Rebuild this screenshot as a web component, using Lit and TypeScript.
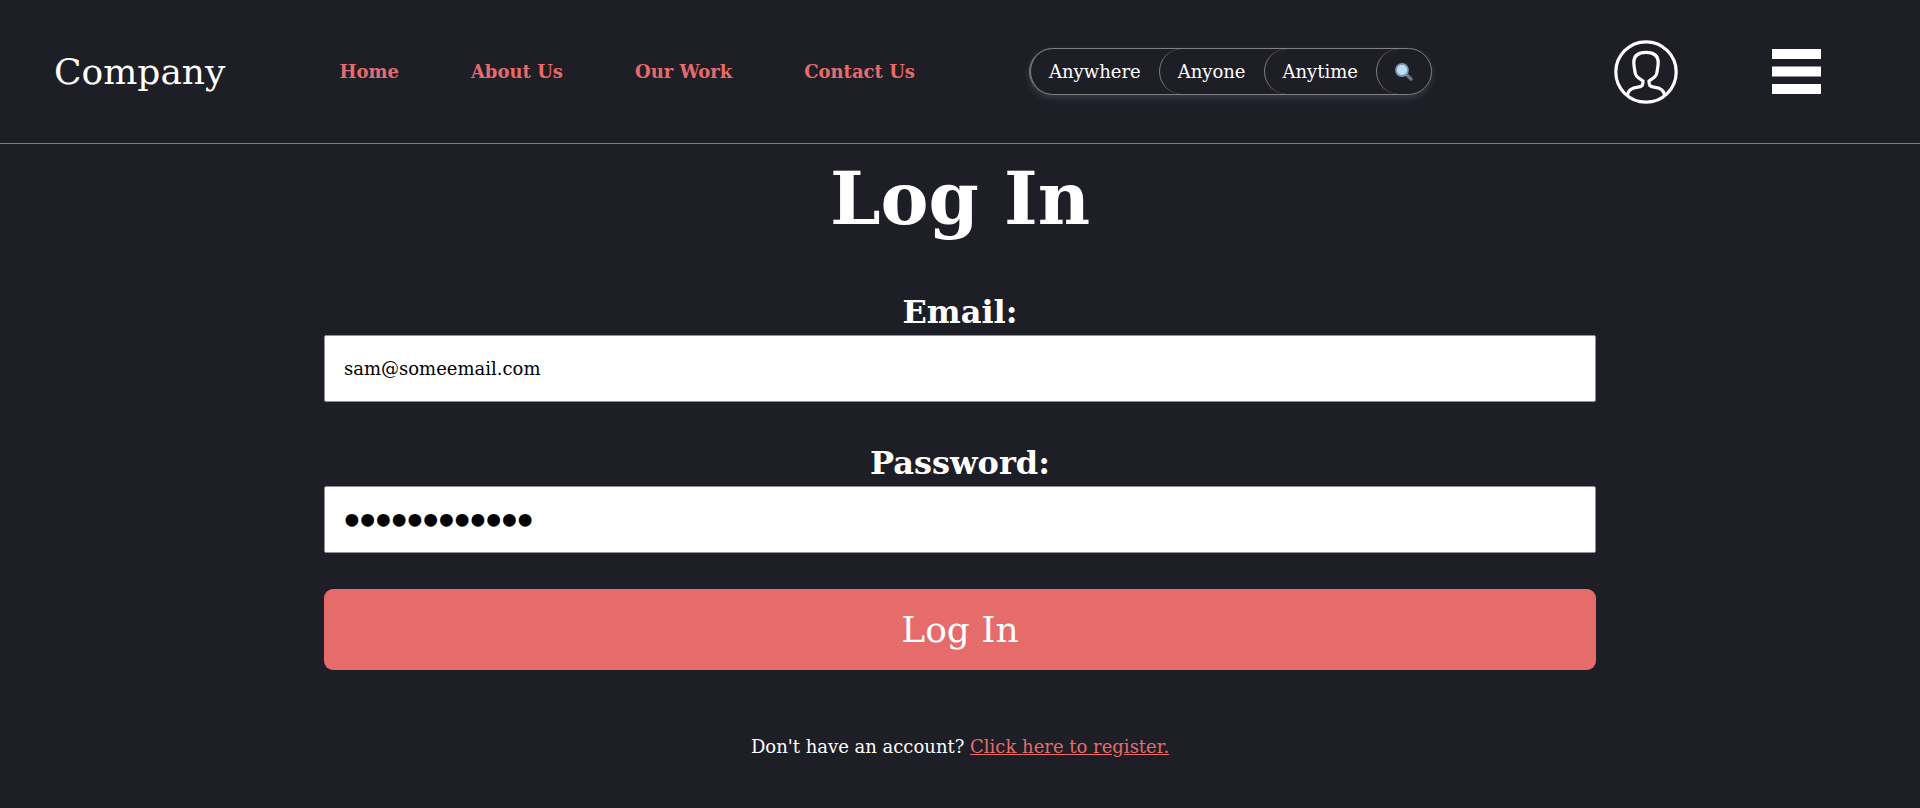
import { LitElement, html, css } from "lit";
import { customElement } from "lit/decorators.js";

@customElement("site-header")
class SiteHeader extends LitElement {
  static styles = css`
    :host {
      display: block;
    }
    .bar {
      display: flex;
      align-items: center;
      justify-content: space-between;
      box-sizing: border-box;
      min-height: 144px;
      padding: 0 99px 0 54px;
      border-bottom: 1px solid #808080;
    }
    .brand {
      font-size: 36px;
      color: inherit;
      text-decoration: none;
    }
    .links {
      display: flex;
      gap: 72px;
      margin: 0;
      padding: 0;
      list-style: none;
    }
    .link {
      color: #e66b6b;
      font-weight: bold;
      text-decoration: none;
    }
    .search {
      display: flex;
      border: 1px solid #808080;
      border-radius: 24px;
      box-shadow: 0 3px 6px rgba(100, 100, 120, 0.4);
    }
    .filter {
      display: flex;
      align-items: center;
      margin: 0;
      padding: 12px 18px;
      border: 0 solid #808080;
      border-left-width: 1px;
      border-radius: 24px;
      background: transparent;
      color: inherit;
      font: inherit;
      line-height: 21px;
    }
    .actions {
      display: flex;
      align-items: center;
      gap: 94px;
      padding-left: 68px;
    }
    .icon-button {
      display: flex;
      margin: 0;
      padding: 0;
      border: 0;
      background: transparent;
      color: inherit;
    }
  `;

  render() {
    return html`
      <header class="bar">
        <a class="brand" href="#">Company</a>
        <nav>
          <ul class="links">
            ${["Home", "About Us", "Our Work", "Contact Us"].map(
              (name) => html`<li><a class="link" href="#">${name}</a></li>`
            )}
          </ul>
        </nav>
        <div class="search" role="search">
          ${["Anywhere", "Anyone", "Anytime"].map(
            (name) => html`<button class="filter" type="button">${name}</button>`
          )}
          <button class="filter" type="button" aria-label="Search">
            <svg width="18" height="18" viewBox="0 0 18 18" aria-hidden="true">
              <path d="M11 11l5 5" stroke="#66788a" stroke-width="3.4" stroke-linecap="round" />
              <circle cx="7" cy="7" r="6" fill="#bbdef8" stroke="#8299aa" stroke-width="1.8" />
            </svg>
          </button>
        </div>
        <div class="actions">
          <button class="icon-button" type="button" aria-label="Account">
            <svg width="64" height="64" viewBox="0 0 64 64" fill="none" stroke="currentColor" stroke-width="3.2" aria-hidden="true">
              <circle cx="32" cy="32" r="30.2" />
              <path d="M13.500 55C14.200 48.500 20.500 47.600 24 47.200C28.500 46.600 29 45.500 29 41C25.500 38.500 22 37.500 21.200 33C20.500 29 19.800 26 19.800 22.500C19.800 15.500 24 12.400 32 12.400S44.200 15.500 44.200 22.500C44.200 26 43.500 29 42.800 33C42 37.500 38.500 38.500 35 41C35 45.500 35.500 46.600 40 47.200C43.500 47.600 49.800 48.500 50.500 55" />
            </svg>
          </button>
          <button class="icon-button" type="button" aria-label="Menu">
            <svg width="49" height="45" viewBox="0 0 49 45" fill="currentColor" aria-hidden="true">
              <path d="M0 0h49v10H0zM0 17.500h49v10H0zM0 35h49v10H0z" />
            </svg>
          </button>
        </div>
      </header>
    `;
  }
}

@customElement("app-root")
class AppRoot extends LitElement {
  static styles = css`
    :host {
      display: block;
      min-height: 100vh;
      background: #1e1e26;
      color: #fff;
      font-family: "DejaVu Serif", serif;
      font-size: 18px;
      line-height: normal;
    }
    .login {
      display: flex;
      flex-direction: column;
      max-width: 1272px;
      margin: 0 auto;
      padding-top: 13px;
      text-align: center;
    }
    .title {
      margin: 0 0 46px;
      font-size: 72px;
      line-height: 84px;
    }
    .form,
    .field {
      display: flex;
      flex-direction: column;
    }
    .form {
      gap: 36px;
    }
    .label {
      margin-top: 6px;
      margin-bottom: 4px;
      font-size: 32px;
      line-height: 38px;
      font-weight: bold;
    }
    .input {
      box-sizing: border-box;
      width: 100%;
      height: 67px;
      padding: 0 19px;
      border: 1px solid #8f8f9d;
      border-radius: 2px;
      background: #fff;
      color: #000;
      font: inherit;
    }
    .secret {
      font-family: "Liberation Serif", serif;
      font-size: 45px;
      -webkit-text-stroke: 2px #000;
    }
    .submit {
      margin: 0;
      padding: 18px;
      border: 0;
      border-radius: 9px;
      background: #e66b6b;
      color: inherit;
      font-family: inherit;
      font-size: 36px;
      line-height: 45px;
    }
    .register {
      margin: 66px 0 0;
      line-height: 21px;
    }
    .register-link {
      color: #e66b6b;
    }
  `;

  render() {
    return html`
      <site-header></site-header>
      <main class="login">
        <h1 class="title">Log In</h1>
        <form class="form">
          <div class="field">
            <label class="label" for="email">Email:</label>
            <input class="input" id="email" type="email" value="sam@someemail.com" />
          </div>
          <div class="field">
            <label class="label" for="password">Password:</label>
            <input class="input secret" id="password" type="password" value="somepassword" />
          </div>
          <button class="submit" type="button">Log In</button>
        </form>
        <p class="register">
          Don't have an account? <a class="register-link" href="#">Click here to register.</a>
        </p>
      </main>
    `;
  }
}
